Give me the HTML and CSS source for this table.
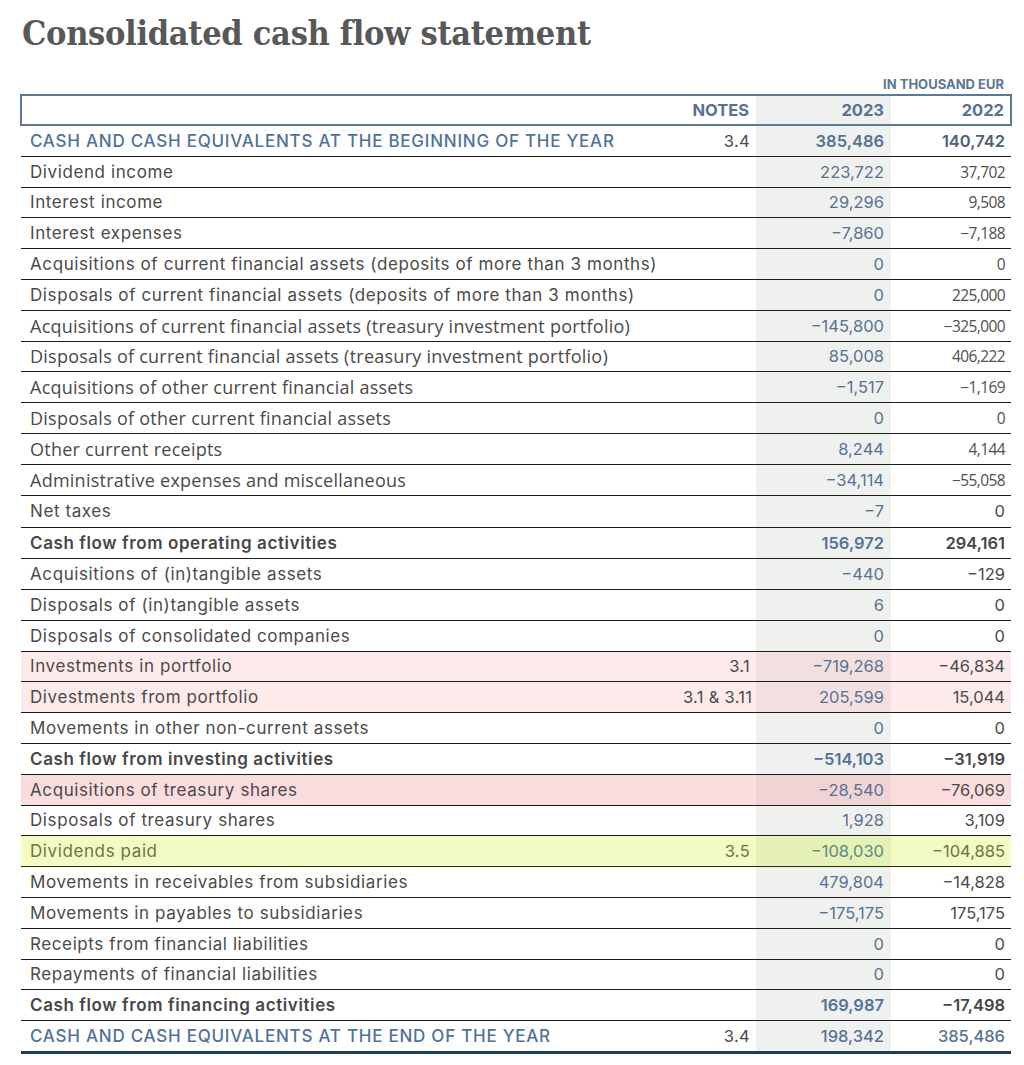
FILE: index.html
```html
<!DOCTYPE html>
<html lang="en">
<head>
<meta charset="utf-8">
<title>Consolidated cash flow statement</title>
<link rel="stylesheet" href="styles.css">
</head>
<body>
<main class="page">
  <h1 class="title">Consolidated cash flow statement</h1>
  <div class="unit">IN THOUSAND EUR</div>
  <table class="cf">
    <colgroup>
      <col class="c-label"><col class="c-notes"><col class="c-cur"><col class="c-prev">
    </colgroup>
    <thead>
      <tr class="head">
        <th></th><th class="num">NOTES</th><th class="num cur">2023</th><th class="num">2022</th>
      </tr>
    </thead>
    <tbody>
      <tr class="cap first"><td>CASH AND CASH EQUIVALENTS AT THE BEGINNING OF THE YEAR</td><td class="num note">3.4</td><td class="num cur">385,486</td><td class="num">140,742</td></tr>
      <tr><td>Dividend income</td><td class="num"></td><td class="num cur">223,722</td><td class="num alt">37,702</td></tr>
      <tr><td>Interest income</td><td class="num"></td><td class="num cur">29,296</td><td class="num alt">9,508</td></tr>
      <tr><td>Interest expenses</td><td class="num"></td><td class="num cur">−7,860</td><td class="num alt">−7,188</td></tr>
      <tr><td>Acquisitions of current financial assets (deposits of more than 3 months)</td><td class="num"></td><td class="num cur">0</td><td class="num alt">0</td></tr>
      <tr><td>Disposals of current financial assets (deposits of more than 3 months)</td><td class="num"></td><td class="num cur">0</td><td class="num alt">225,000</td></tr>
      <tr class="alt"><td>Acquisitions of current financial assets (treasury investment portfolio)</td><td class="num"></td><td class="num cur">−145,800</td><td class="num alt">−325,000</td></tr>
      <tr class="alt"><td>Disposals of current financial assets (treasury investment portfolio)</td><td class="num"></td><td class="num cur">85,008</td><td class="num alt">406,222</td></tr>
      <tr class="alt"><td>Acquisitions of other current financial assets</td><td class="num"></td><td class="num cur">−1,517</td><td class="num alt">−1,169</td></tr>
      <tr class="alt"><td>Disposals of other current financial assets</td><td class="num"></td><td class="num cur">0</td><td class="num alt">0</td></tr>
      <tr class="alt"><td>Other current receipts</td><td class="num"></td><td class="num cur">8,244</td><td class="num alt">4,144</td></tr>
      <tr class="alt"><td>Administrative expenses and miscellaneous</td><td class="num"></td><td class="num cur">−34,114</td><td class="num alt">−55,058</td></tr>
      <tr class="tall"><td>Net taxes</td><td class="num"></td><td class="num cur">−7</td><td class="num">0</td></tr>
      <tr class="total"><td>Cash flow from operating activities</td><td class="num"></td><td class="num cur">156,972</td><td class="num">294,161</td></tr>
      <tr><td>Acquisitions of (in)tangible assets</td><td class="num"></td><td class="num cur">−440</td><td class="num">−129</td></tr>
      <tr><td>Disposals of (in)tangible assets</td><td class="num"></td><td class="num cur">6</td><td class="num">0</td></tr>
      <tr><td>Disposals of consolidated companies</td><td class="num"></td><td class="num cur">0</td><td class="num">0</td></tr>
      <tr class="pink"><td>Investments in portfolio</td><td class="num note">3.1</td><td class="num cur">−719,268</td><td class="num">−46,834</td></tr>
      <tr class="pink"><td>Divestments from portfolio</td><td class="num note">3.1 &amp; 3.11</td><td class="num cur">205,599</td><td class="num">15,044</td></tr>
      <tr><td>Movements in other non-current assets</td><td class="num"></td><td class="num cur">0</td><td class="num">0</td></tr>
      <tr class="total"><td>Cash flow from investing activities</td><td class="num"></td><td class="num cur">−514,103</td><td class="num">−31,919</td></tr>
      <tr class="red"><td>Acquisitions of treasury shares</td><td class="num"></td><td class="num cur">−28,540</td><td class="num">−76,069</td></tr>
      <tr><td>Disposals of treasury shares</td><td class="num"></td><td class="num cur">1,928</td><td class="num">3,109</td></tr>
      <tr class="lime"><td>Dividends paid</td><td class="num note">3.5</td><td class="num cur">−108,030</td><td class="num">−104,885</td></tr>
      <tr><td>Movements in receivables from subsidiaries</td><td class="num"></td><td class="num cur">479,804</td><td class="num">−14,828</td></tr>
      <tr><td>Movements in payables to subsidiaries</td><td class="num"></td><td class="num cur">−175,175</td><td class="num">175,175</td></tr>
      <tr><td>Receipts from financial liabilities</td><td class="num"></td><td class="num cur">0</td><td class="num">0</td></tr>
      <tr><td>Repayments of financial liabilities</td><td class="num"></td><td class="num cur">0</td><td class="num">0</td></tr>
      <tr class="total"><td>Cash flow from financing activities</td><td class="num"></td><td class="num cur">169,987</td><td class="num">−17,498</td></tr>
      <tr class="cap last"><td>CASH AND CASH EQUIVALENTS AT THE END OF THE YEAR</td><td class="num note">3.4</td><td class="num cur">198,342</td><td class="num">385,486</td></tr>
    </tbody>
  </table>
</main>
</body>
</html>
```

FILE: styles.css
```css
html, body {
  margin: 0;
  padding: 0;
  background: #ffffff;
}

.page {
  padding: 9px 14px 0 20px;
  font-family: Inter, "Noto Sans", sans-serif;
  color: #4a4a4a;
}

.title {
  margin: 0 0 0 2px;
  font-family: "DejaVu Serif Condensed", "DejaVu Serif", serif;
  font-stretch: condensed;
  font-weight: 700;
  font-size: 34px;
  line-height: 48px;
  color: #585858;
  letter-spacing: -0.3px;
}

.unit {
  text-align: right;
  padding-right: 6px;
  margin-top: 18px;
  font-size: 13px;
  font-weight: 700;
  line-height: 18px;
  color: #5b7696;
}

.cf {
  width: 990px;
  table-layout: fixed;
  border-collapse: collapse;
  margin-top: 1px;
  font-size: 16.5px;
}

.c-label { width: 662px; }
.c-notes { width: 73px; }
.c-cur { width: 135px; }
.c-prev { width: 120px; }

.cf th,
.cf td {
  padding: 0 7px 0 9px;
  height: 29.8px;
  line-height: 20px;
  text-align: left;
  white-space: nowrap;
  vertical-align: middle;
  overflow: visible;
}

.cf td:first-child {
  font-size: 17px;
  letter-spacing: 0.6px;
}

.cf .num {
  text-align: right;
  padding-left: 0;
  padding-right: 7px;
}

.cf td:last-child,
.cf th:last-child {
  padding-right: 6px;
}

.cf .note { letter-spacing: 0.3px; padding-right: 6px; }

.head th {
  border-top: 2px solid #5a789b;
  border-bottom: 2px solid #5a789b;
  height: 28px;
  font-weight: 700;
  color: #587294;
}

.head th:first-child { border-left: 2px solid #5a789b; }
.head th:last-child { border-right: 2px solid #5a789b; }

.cf .cur {
  background: #eff1ef;
  color: #587294;
}

.cf tbody tr {
  border-bottom: 1px solid #1c1c1c;
}

.cf tbody tr.tall td { height: 31.8px; }

.cf tbody tr.cap td:first-child {
  color: #4f7299;
  font-weight: 500;
  letter-spacing: 0.75px;
}

.cf tbody tr.first td.num:not(.note) {
  font-weight: 600;
}

.cf tbody tr.first td:last-child { color: #4e6079; }

.cf tbody tr.last {
  border-bottom: 3px solid #1c3d5f;
}

.cf tbody tr.last td.num:not(.note) {
  color: #587294;
  font-weight: 500;
}

.cf tbody tr.total td {
  font-weight: 600;
  color: #474747;
}

.cf tbody tr.total td.cur { color: #56739a; }

.cf tbody tr.alt td:first-child {
  font-family: "Open Sans", "Noto Sans", sans-serif;
  font-size: 18px;
  letter-spacing: 0.25px;
}

.cf td.alt {
  font-family: "Open Sans", "Noto Sans", sans-serif;
  font-size: 15.5px;
  font-weight: 400;
  letter-spacing: -0.6px;
  color: #4f4f4f;
}

.cf tbody tr.pink { background: #fdeaea; }
.cf tbody tr.pink td.cur { background: #f2e0e0; }

.cf tbody tr.red {
  background: #f9dcde;
  border-top: 1px solid #5a1c1c;
}
.cf tbody tr.red td.cur { background: #efd3d5; }

.cf tbody tr.lime {
  background: #f2fbc3;
  border-bottom-color: #2c3300;
}
.cf tbody tr.lime td { color: #6a7544; }
.cf tbody tr.lime td.cur { background: #e5f1b6; color: #5e8a80; }
```
